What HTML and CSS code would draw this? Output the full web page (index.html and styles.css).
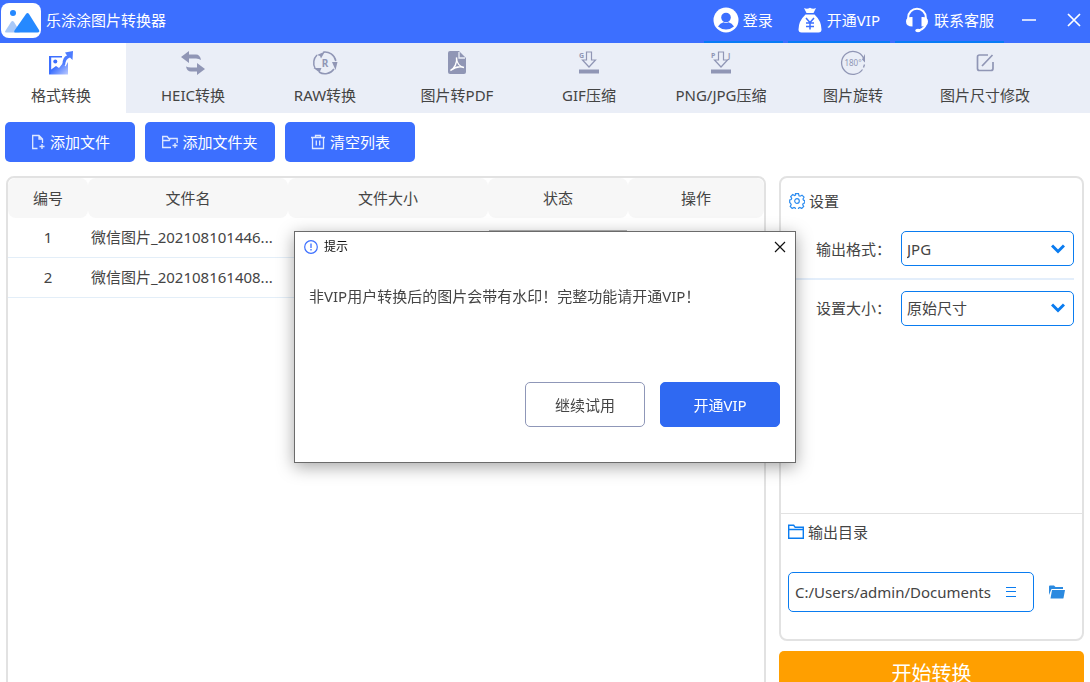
FILE: index.html
```html
<!DOCTYPE html>
<html lang="zh-CN">
<head>
<meta charset="utf-8">
<title>乐涂涂图片转换器</title>
<link rel="stylesheet" href="styles.css">
</head>
<body>
<div class="app">
  <header class="titlebar">
    <svg class="logo" width="40" height="36" viewBox="0 0 40 36"><rect width="40" height="35" rx="8" fill="#fff"/><circle cx="12" cy="10" r="3" fill="#2589ff"/><path d="M4 28.500L10 19q1.500-2 3 0l6 9.500q0 1-1 1H5q-1 0-1-1z" fill="#a9c9f8"/><path d="M13.500 27.500L25 11q1.500-2 3 0l10 16q1 2.500-1.500 2.500h-22q-2 0-1-2z" fill="#2589ff"/></svg>
    <h1 class="app-name">乐涂涂图片转换器</h1>
    <div class="account">
      <button class="account-btn"><svg width="26" height="26" viewBox="0 0 26 26"><circle cx="13" cy="13" r="12.500" fill="#fff"/><circle cx="13" cy="10.500" r="4.800" fill="#3c6fff"/><path d="M5 19.500q2-3.500 5.500-4.300q2.500 1.500 5 0q3.500.8 5.500 4.300q-3.500 3-8 3t-8-3z" fill="#3c6fff"/></svg>登录</button>
      <button class="account-btn"><svg width="26" height="26" viewBox="0 0 26 26"><path d="M7 1q3 1.500 6-.2q3 1.700 6 .2l-2.500 5h-7zM8.500 7.500h9q7 6.500 7 15q0 3-3 3h-17q-3 0-3-3q0-8.500 7-15z" fill="#fff"/><path d="M9 11l4 4.500 4-4.500M13 15.500v7M9 16h8M9 19.500h8" fill="none" stroke="#3c6fff" stroke-width="1.500"/></svg>开通VIP</button>
      <button class="account-btn"><svg width="26" height="26" viewBox="0 0 26 26"><path d="M4.200 12v-1.500a8.800 8.800 0 0 1 17.600 0V16q0 5-6.800 7.500" fill="none" stroke="#fff" stroke-width="2"/><path d="M8.500 10v9.500q-6.500 0-6.500-5T8.500 10zM17.500 10v9.500q6.500 0 6.500-5T17.500 10z" fill="#fff"/><ellipse cx="14" cy="23.500" rx="2.800" ry="1.800" fill="#fff"/></svg>联系客服</button>
    </div>
    <button class="window-btn" aria-label="最小化"><svg width="14" height="14" viewBox="0 0 14 14"><path d="M0 7h14" stroke="#fff" stroke-width="1.500"/></svg></button>
    <button class="window-btn window-close" aria-label="关闭"><svg width="14" height="14" viewBox="0 0 14 14"><path d="M1 1l12 12M13 1L1 13" stroke="#fff" stroke-width="1.700"/></svg></button>
  </header>

  <nav class="tabs">
    <button class="tab tab-active"><svg width="26" height="26" viewBox="0 0 26 26"><defs><linearGradient id="pic" x1="0" y1="0" x2="1" y2="1"><stop offset=".45" stop-color="#3c6fff"/><stop offset="1" stop-color="#bccbff"/></linearGradient></defs><path d="M1.800 6H14v1.400H3.200v12L8 16l3 2 4-5 2.500 3.500L20 12v12.500H1z" fill="url(#pic)"/><path d="M1 6h1.800v18H1z" fill="#3c6fff"/><circle cx="7.300" cy="11.500" r="2" fill="#3c6fff"/><path d="M14.500 14q0-7 4.500-8.500l-2-3L25 1l-.5 9-2.500-2.500q-4.500 1-5 8z" fill="#4d7cff"/></svg>格式转换</button>
    <button class="tab"><svg width="26" height="26" viewBox="0 0 26 26"><path d="M1 7l8-6v3.500h7q4 0 5 5.500-2-1.500-5-1.500H9V13zM25 19l-8 6v-3.500h-6q-4 0-5-5 2 1 5 1h6V13z" fill="#9096b5"/></svg>HEIC转换</button>
    <button class="tab"><svg width="26" height="26" viewBox="0 0 26 26"><path d="M3 18A11 11 0 0 1 5 5M11 2.200A11 11 0 0 1 23.800 11M22 19A11 11 0 0 1 7 22" fill="none" stroke="#9096b5" stroke-width="1.500"/><path d="M5 5l8-3.500-4 7-1-2.500zM20 12h5.500l-2 8zM1.500 18h8l-2 4.500z" fill="#9096b5"/><text class="glyph glyph-r" x="13" y="17" text-anchor="middle">R</text></svg>RAW转换</button>
    <button class="tab"><svg width="26" height="26" viewBox="0 0 26 26"><path d="M6 1h9l7 7v14q0 2-2 2H6q-2 0-2-2V3q0-2 2-2z" fill="#9096b5"/><path d="M15 2v6h6" fill="none" stroke="#eaeef7" stroke-width="1.300"/><path d="M6.500 20.500c4-2 7-8 6-13 0 5 3 9 7.500 10-4.500-1.500-9-.5-13.500 3z" fill="none" stroke="#fff" stroke-width="1.400"/></svg>图片转PDF</button>
    <button class="tab"><svg width="26" height="26" viewBox="0 0 26 26"><path d="M10.500 2h5v8h4L13 17 6.500 10h4z" fill="none" stroke="#9096b5" stroke-width="1.200"/><path d="M3 19.500h20v4H3z" fill="#9096b5"/><text class="glyph" x="3" y="8">G</text></svg>GIF压缩</button>
    <button class="tab"><svg width="26" height="26" viewBox="0 0 26 26"><path d="M10.500 2h5v8h4L13 17 6.500 10h4z" fill="none" stroke="#9096b5" stroke-width="1.200"/><path d="M3 19.500h20v4H3z" fill="#9096b5"/><text class="glyph" x="3" y="8">P</text><text class="glyph" x="20" y="8">J</text></svg>PNG/JPG压缩</button>
    <button class="tab"><svg width="26" height="26" viewBox="0 0 26 26"><path d="M23.500 8A11.500 11.500 0 1 0 22.500 19.500M23.500 17.500l1-3" fill="none" stroke="#9096b5" stroke-width="1.300"/><path d="M25 4v8.500l-3-3z" fill="#9096b5"/><text class="glyph glyph-deg" x="13" y="16" text-anchor="middle">180°</text></svg>图片旋转</button>
    <button class="tab"><svg width="26" height="26" viewBox="0 0 26 26"><path d="M16 5H7.500Q5.500 5 5.500 7v11.500q0 2 2 2H19q2 0 2-2V12M10 16L20.500 5" fill="none" stroke="#9096b5" stroke-width="1.700"/></svg>图片尺寸修改</button>
  </nav>

  <div class="toolbar">
    <button class="tool-btn"><svg width="16" height="16" viewBox="0 0 16 16"><path d="M7.500 14.500H2.700V1.500H9L12.500 5v4M9 1.500V5h3.500M12 10v5M9.500 12.500h5" /></svg>添加文件</button>
    <button class="tool-btn"><svg width="16" height="16" viewBox="0 0 16 16"><path d="M9 13.500H.7v-11h4.500l1.500 2h8.500V9M.7 6.500h6.500l1-2M13 9v5M10.500 11.500h5"/></svg>添加文件夹</button>
    <button class="tool-btn"><svg width="16" height="16" viewBox="0 0 16 16"><path d="M1 3.500h14M5.500 3.500v-2h5v2M2.500 3.500v11h11v-11M6.300 6.500v5M9.700 6.500v5"/></svg>清空列表</button>
  </div>

  <main class="workspace">
    <section class="file-panel">
      <table class="files">
        <colgroup><col class="col-no"><col class="col-wide"><col class="col-wide"><col class="col-state"><col></colgroup>
        <thead><tr><th>编号</th><th>文件名</th><th>文件大小</th><th>状态</th><th>操作</th></tr></thead>
        <tbody>
          <tr><td>1</td><td class="name">微信图片_202108101446...</td><td></td><td><div class="bar"></div></td><td></td></tr>
          <tr><td>2</td><td class="name">微信图片_202108161408...</td><td></td><td><div class="bar"></div></td><td></td></tr>
        </tbody>
      </table>
    </section>

    <aside class="side">
      <div class="side-panel">
        <section class="settings">
          <h2 class="side-title"><svg width="16" height="16" viewBox="0 0 16 16"><path d="M6.500 .7h3l.5 2 1.200.5 1.800-1 2 2-1 1.800.5 1.200 1.200.3v2.500l-1.500.5-.5 1.200 1 1.800-2 2-1.800-1-1.200.5-.5 1.700h-2.500l-.5-1.700-1.200-.5-1.800 1-2-2 1-1.800-.5-1.200L.7 9.500v-2.500l1.500-.4.5-1.200-1-1.800 2-2 1.800 1 1-.5z" fill="none" stroke="#2b8cf0" stroke-width="1.200"/><circle cx="8" cy="8" r="2.300" fill="none" stroke="#2b8cf0" stroke-width="1.200"/></svg>设置</h2>
          <div class="field">
            <label for="format">输出格式：</label>
            <div class="select-box"><select id="format"><option>JPG</option></select><svg class="chevron" width="14" height="10" viewBox="0 0 14 10"><path d="M1 1.500l6 6 6-6" fill="none" stroke="#0a7cf0" stroke-width="3"/></svg></div>
          </div>
          <div class="field">
            <label for="size">设置大小：</label>
            <div class="select-box"><select id="size"><option>原始尺寸</option></select><svg class="chevron" width="14" height="10" viewBox="0 0 14 10"><path d="M1 1.500l6 6 6-6" fill="none" stroke="#0a7cf0" stroke-width="3"/></svg></div>
          </div>
        </section>
        <section class="output">
          <h2 class="side-title"><svg width="16" height="16" viewBox="0 0 16 16"><path d="M.7 14.300v-13h5l1.500 2h8.100v11zM.7 5.500h14.600" fill="none" stroke="#0a7cf0" stroke-width="1.400"/></svg>输出目录</h2>
          <div class="path-row">
            <div class="path-box">
              <input class="path" type="text" value="C:/Users/admin/Documents" aria-label="输出目录">
              <button class="icon-btn" aria-label="历史目录"><svg width="10" height="10" viewBox="0 0 10 10"><path d="M0 .5h10M0 4.500h10M0 9.500h10" stroke="#0a7cf0"/></svg></button>
            </div>
            <button class="icon-btn" aria-label="打开目录"><svg width="16" height="14" viewBox="0 0 16 14"><path d="M0 10V1.500Q0 .5 1 .5h4l1.500 1.500H14v2H2.500z" fill="#2b8ae0"/><path d="M3 5h13l-1.500 8q0 .5-1 .5H1.500z" fill="#2b8ae0"/></svg></button>
          </div>
        </section>
      </div>
      <button class="start">开始转换</button>
    </aside>
  </main>
</div>

<div class="overlay">
  <div class="dialog" role="dialog" aria-labelledby="dialog-title">
    <header class="dialog-head">
      <svg width="14" height="14" viewBox="0 0 14 14"><circle cx="7" cy="7" r="6.300" fill="none" stroke="#3c6fff" stroke-width="1.200"/><path d="M7 3.500v4.500M7 9v1.500" stroke="#3c6fff" stroke-width="1.300"/></svg>
      <h2 id="dialog-title">提示</h2>
      <button class="icon-btn" aria-label="关闭"><svg width="12" height="12" viewBox="0 0 12 12"><path d="M1 1l10 10M11 1L1 11" stroke="#111" stroke-width="1.200"/></svg></button>
    </header>
    <p class="dialog-text">非VIP用户转换后的图片会带有水印！完整功能请开通VIP！</p>
    <footer class="dialog-actions">
      <button class="dialog-btn">继续试用</button>
      <button class="dialog-btn dialog-primary">开通VIP</button>
    </footer>
  </div>
</div>
</body>
</html>
```
FILE: styles.css
```css
* { box-sizing: border-box; }
body, button, input, select {
  font-family: "Noto Sans", "Noto Sans CJK SC", sans-serif;
  font-size: 15px;
  color: #444;
}
body { margin: 0; background: #fff; line-height: 20px; }
h1, h2, p { margin: 0; font-size: 15px; font-weight: 400; }
button { border: 0; padding: 0; background: none; line-height: 20px; cursor: pointer; }
svg { display: block; flex: none; }

.app { height: 100vh; overflow: hidden; }

.titlebar { display: flex; align-items: center; height: 43px; padding-left: 1px; background: #3c6fff; }
.app-name { flex: 1; padding: 0 5px 4px; color: #fff; }
.logo { margin-bottom: 1px; }
.account { display: flex; gap: 5px; align-self: stretch; }
.account-btn { display: flex; align-items: center; gap: 4px; padding: 0 10px 2px 9px; color: #fff; border-bottom: 2px solid #087bf5; }
.window-btn { width: 50px; height: 40px; padding-bottom: 1px; margin-bottom: 3px; display: flex; align-items: center; justify-content: center; }
.window-close { width: 36px; padding-left: 4px; }

.tabs { display: flex; height: 70px; background: #eaeef7; }
.tab { width: 132px; display: flex; flex-direction: column; align-items: center; gap: 9px; padding-top: 7px; }
.tab-active { width: 126px; padding-right: 4px; margin-right: 1px; background: #fff; }
.glyph { font-size: 7px; font-weight: 700; fill: #9096b5; }
.glyph-r { font-size: 10px; }
.glyph-deg { font-size: 8px; font-weight: 400; }

.toolbar { display: flex; gap: 10px; padding: 9px 5px 14px; }
.tool-btn { width: 130px; height: 40px; display: flex; align-items: center; justify-content: center; gap: 4px; border-radius: 5px; background: #3c6fff; color: #fff; }
.tool-btn svg { fill: none; stroke: #dfe8ff; stroke-width: 1.3; }

.workspace { display: grid; grid-template-columns: 1fr 305px; gap: 13px; padding: 0 6px; }
.file-panel { border: 2px solid #e2e2e2; border-radius: 8px; }
.files { width: 100%; table-layout: fixed; border-collapse: separate; border-spacing: 0; }
.col-no { width: 80px; }
.col-wide { width: 200px; }
.col-state { width: 140px; }
.files th { height: 40px; padding: 0; background: #f7f7f7; border-radius: 8px; font-weight: 400; }
.files td { height: 40px; padding: 0 1px 2px; border-bottom: 1px solid #e3eef8; text-align: center; white-space: nowrap; }
.files .name { padding-left: 3px; text-align: left; }
.bar { height: 14px; background: #b4b4b4; }

.side-panel { border: 2px solid #e2e2e2; border-radius: 8px; }
.settings { min-height: 336px; padding: 13px 8px 0; border-bottom: 1px solid #e2e2e2; }
.side-title { display: flex; align-items: center; gap: 4px; }
.field { display: flex; align-items: center; justify-content: space-between; height: 56px; padding-left: 27px; }
.field:first-of-type { height: 69px; padding-top: 8px; border-bottom: 2px solid #e3eefb; }
.select-box { display: flex; align-items: center; position: relative; width: 173px; }
.select-box select { appearance: none; width: 100%; height: 35px; padding: 0 5px; border: 1px solid #0a7cf0; border-radius: 5px; background: #fff; }
.chevron { position: absolute; right: 9px; pointer-events: none; }
.output { padding: 8px 7px 27px; }
.path-row { display: flex; align-items: center; gap: 15px; padding: 30px 10px 0 0; }
.path-box { flex: 1; min-width: 0; display: flex; align-items: center; height: 40px; padding: 0 17px 0 6px; border: 1px solid #0a7cf0; border-radius: 5px; }
.path { flex: 1; min-width: 0; padding: 0; border: 0; background: none; outline: 0; }
.start { width: 100%; height: 46px; margin-top: 10px; border-radius: 5px; background: #ff9f00; color: #fff; font-size: 20px; }

.overlay { position: fixed; inset: 0; display: flex; align-items: center; justify-content: center; padding-top: 12px; }
.dialog { width: 502px; min-height: 232px; background: #fff; border: 1px solid #6b6b6b; box-shadow: 0 4px 16px rgba(0, 0, 0, .35); }
.dialog-head { display: flex; align-items: center; gap: 6px; height: 29px; padding: 0 9px; }
.dialog-head h2 { flex: 1; font-size: 12px; color: #111; }
.dialog-text { padding: 25px 14px 0; }
.dialog-actions { display: flex; justify-content: flex-end; gap: 15px; padding: 76px 15px 35px; }
.dialog-btn { width: 120px; height: 45px; border: 1px solid #8f97b8; border-radius: 5px; }
.dialog-primary { border-color: #2f69f2; background: #2f69f2; color: #fff; }
```
